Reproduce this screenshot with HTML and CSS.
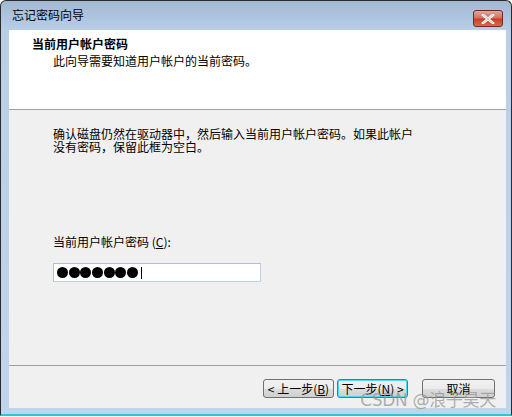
FILE: index.html
```html
<!DOCTYPE html>
<html>
<head>
<meta charset="utf-8">
<link rel="stylesheet" href="styles.css">
</head>
<body>
<div class="window">
  <div class="titlebar">
    <span class="title">忘记密码向导</span>
    <div class="close">
      <svg width="14" height="10" viewBox="0 0 14 10"><path d="M2 1 L12 9 M12 1 L2 9" stroke="#fff" stroke-width="2.6" stroke-linecap="square"/><path d="M2 1 L12 9 M12 1 L2 9" stroke="#7a3a2a" stroke-width="0.6" fill="none" opacity="0.5"/></svg>
    </div>
  </div>
  <div class="client">
    <div class="header">
      <div class="h-title">当前用户帐户密码</div>
      <div class="h-sub">此向导需要知道用户帐户的当前密码。</div>
    </div>
    <div class="body">
      <p class="desc">确认磁盘仍然在驱动器中，然后输入当前用户帐户密码。如果此帐户<br>没有密码，保留此框为空白。</p>
      <div class="label">当前用户帐户密码 (<u>C</u>):</div>
      <div class="input"><span class="dot"></span><span class="dot"></span><span class="dot"></span><span class="dot"></span><span class="dot"></span><span class="dot"></span><span class="dot"></span><span class="caret"></span></div>
    </div>
    <div class="footer">
      <div class="btn">&lt; 上一步(<u>B</u>)</div>
      <div class="btn focus">下一步(<u>N</u>) &gt;</div>
      <div class="btn cancel">取消</div>
      <div class="watermark">CSDN @浪子昊天</div>
    </div>
  </div>
</div>
</body>
</html>
```
FILE: styles.css
```css
html, body { margin: 0; padding: 0; }
body {
  width: 512px; height: 417px; overflow: hidden; background: #fff;
  font-family: "Noto Sans CJK SC", "DejaVu Sans", sans-serif;
  font-size: 12px; color: #000;
}
.window {
  border: 1px solid #2b2b2b;
  border-bottom: 2px solid #2bc4de;
  border-radius: 6px 6px 0 0;
  background: linear-gradient(to bottom, #a3b9d3 0px, #b9cfe8 30px, #c0d5ec 100%);
  box-sizing: border-box;
  height: 416px;
  display: flex; flex-direction: column;
}
.titlebar {
  height: 29px; position: relative;
  display: flex; align-items: center;
  padding-left: 11px;
}
.title { font-size: 12px; line-height: 14px; margin-top: -1px; }
.close {
  position: absolute; right: 8px; top: 9px;
  width: 30px; height: 17px; box-sizing: border-box;
  border: 1px solid #6d2a22; border-radius: 3px;
  background: linear-gradient(to bottom, #e8a597 0%, #d57160 45%, #c4402a 55%, #d96a4d 100%);
  display: flex; align-items: center; justify-content: center;
}
.client {
  margin: 0 5px 0 8px;
  background: #f0f0f0;
  flex: 0 0 378px;
  display: flex; flex-direction: column;
}
.header {
  background: #fff; height: 80px; box-sizing: border-box;
  border-bottom: 1px solid #a0a0a0;
  padding: 6px 0 0 23px;
}
.h-title { font-weight: bold; line-height: 16px; }
.h-sub { padding-left: 21px; line-height: 16px; margin-top: 1px; }
.body { flex: 1; padding: 0 0 0 44px; border-bottom: 1px solid #a0a0a0; }
.desc { margin: 17px 0 0 0; line-height: 13px; }
.label { margin-top: 82px; line-height: 14px; }
.input {
  margin-top: 14px; width: 208px; height: 19px; box-sizing: border-box;
  border: 1px solid; border-color: #a8c0dc #bcd0e6 #bcd0e6 #a8c0dc;
  background: #fff; display: flex; align-items: center; padding-left: 3px;
}
.dot { width: 11px; height: 11px; border-radius: 50%; background: #000; margin-right: 0.7px; flex: 0 0 11px; }
.caret { width: 1px; height: 12px; background: #000; margin-left: 2px; }
.footer {
  height: 42px; position: relative;
  display: flex; align-items: flex-start; justify-content: flex-end;
  padding: 13px 11px 0 0; box-sizing: border-box;
}
.btn {
  height: 19px; width: 71px; box-sizing: border-box;
  border: 1px solid #707070; border-radius: 3px;
  background: linear-gradient(to bottom, #f2f2f2 0%, #ebebeb 50%, #dddddd 51%, #cfcfcf 100%);
  display: flex; align-items: center; justify-content: center;
  line-height: 14px; margin-left: 3px;
}
.btn.focus { border-color: #3c7fb1; box-shadow: inset 0 0 0 1px #48d9f6; }
.btn.cancel { margin-left: 14px; width: 73px; }
.watermark {
  position: absolute; right: 10px; top: 25px;
  font-size: 17px; color: rgba(150,150,150,0.75); font-family: "DejaVu Sans", "Noto Sans CJK SC", sans-serif;
  line-height: 18px; letter-spacing: -0.3px;
}
```
